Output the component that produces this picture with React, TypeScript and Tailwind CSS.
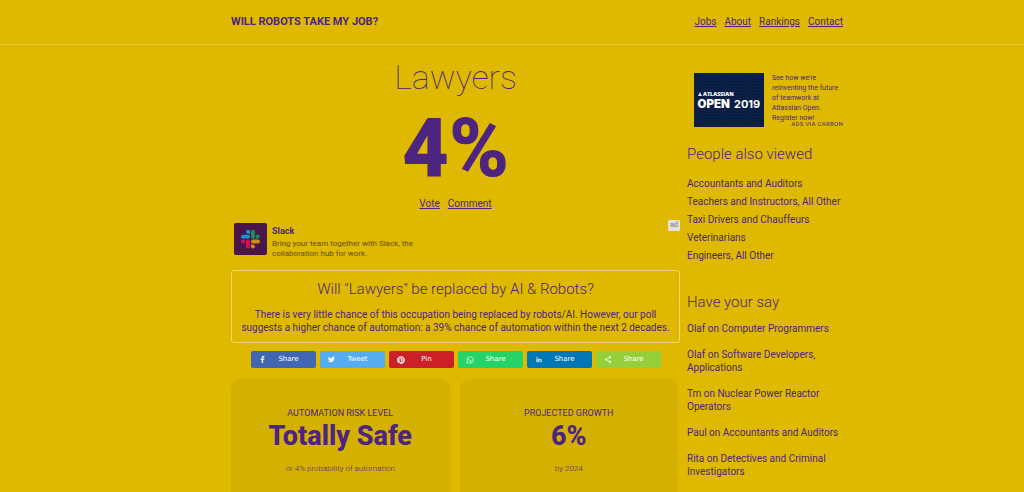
import type { ReactNode } from 'react';
import { FaFacebookF, FaTwitter, FaPinterest, FaWhatsapp, FaLinkedinIn } from 'react-icons/fa';
import { MdShare } from 'react-icons/md';

const navLinks = ['Jobs', 'About', 'Rankings', 'Contact'];

const alsoViewed = [
    'Accountants and Auditors',
    'Teachers and Instructors, All Other',
    'Taxi Drivers and Chauffeurs',
    'Veterinarians',
    'Engineers, All Other',
];

const comments = [
    'Olaf on Computer Programmers',
    'Olaf on Software Developers, Applications',
    'Tm on Nuclear Power Reactor Operators',
    'Paul on Accountants and Auditors',
    'Rita on Detectives and Criminal Investigators',
];

const shares = [
    { label: 'Share', color: 'bg-[#4267b2]', icon: <FaFacebookF size={7} /> },
    { label: 'Tweet', color: 'bg-[#55acee]', icon: <FaTwitter size={7} /> },
    { label: 'Pin', color: 'bg-[#cb2027]', icon: <FaPinterest size={8} /> },
    { label: 'Share', color: 'bg-[#25d366]', icon: <FaWhatsapp size={8} /> },
    { label: 'Share', color: 'bg-[#0077b5]', icon: <FaLinkedinIn size={6} /> },
    { label: 'Share', color: 'bg-[#95d03a]', icon: <MdShare size={9} /> },
];

const stats = [
    { title: 'AUTOMATION RISK LEVEL', value: 'Totally Safe', note: 'or 4% probability of automation' },
    { title: 'PROJECTED GROWTH', value: '6%', note: 'by 2024' },
];

function Container({ children, className }: { children: ReactNode; className: string }) {
    return <div className={`mx-auto w-full max-w-[662px] pl-[50px] ${className}`}>{children}</div>;
}

function SlackLogo() {
    return (
        <svg viewBox="0 0 33 32" className="h-8 w-[33px] shrink-0" aria-hidden="true">
            <rect width="33" height="32" rx="2" fill="#4a154b" />
            <g fill="#1597d4">
                <rect x="7" y="11.700" width="9" height="3.900" rx="1.900" />
                <path d="M14 6.700a2 2 0 0 1 2 2v2h-2a2 2 0 0 1 0-4z" />
            </g>
            <g fill="#16915c">
                <rect x="17" y="6.700" width="3.900" height="9" rx="1.900" />
                <path d="M25.700 13.500a2 2 0 0 1-2 2h-2v-2a2 2 0 0 1 4 0z" />
            </g>
            <g fill="#cf8a12">
                <rect x="17" y="16.500" width="9" height="3.900" rx="1.900" />
                <path d="M19 25.500a2 2 0 0 1-2-2v-2h2a2 2 0 0 1 0 4z" />
            </g>
            <g fill="#d90f56">
                <rect x="12" y="16.500" width="3.900" height="9" rx="1.900" />
                <path d="M7 18.500a2 2 0 0 1 2-2h2v2a2 2 0 0 1-4 0z" />
            </g>
        </svg>
    );
}

function AtlassianBanner() {
    return (
        <svg viewBox="0 0 70 54" className="h-[54px] w-[70px] shrink-0" role="img" aria-label="Atlassian Open 2019">
            <defs>
                <pattern id="dots" width="3" height="3" patternUnits="userSpaceOnUse">
                    <rect x="1" y="1" width="1" height="1" fill="#14274f" />
                </pattern>
            </defs>
            <rect width="70" height="54" fill="#091e42" />
            <rect width="70" height="54" fill="url(#dots)" />
            <path d="M4 23l1.400-2.200 1.200 2.200zM5.300 20.300l.6-1.300 2 4h-1.200z" fill="#fff" />
            <text x="9" y="23" fontSize="5.400" fontWeight="800" fill="#fff" fontFamily="Open Sans, sans-serif">ATLASSIAN</text>
            <text x="3.500" y="35" fontSize="11.500" fontWeight="900" fill="#fff" fontFamily="Inter, sans-serif">OPEN</text>
            <text x="40" y="35" fontSize="11" fontWeight="700" fill="#fff" fontFamily="Inter, sans-serif">2019</text>
        </svg>
    );
}

export default function App() {
    return (
        <div className="min-h-screen bg-[#dfb900] font-[Roboto,sans-serif] text-[10px] leading-[13px] text-[#4d2480]">
            <header className="border-b border-[#e7cb45]">
                <Container className="flex h-11 items-center justify-between pb-[2px]">
                    <a href="#" className="text-[11px] font-bold">WILL ROBOTS TAKE MY JOB?</a>
                    <nav className="flex gap-2">
                        {navLinks.map((link) => (
                            <a key={link} href="#" className="underline">{link}</a>
                        ))}
                    </nav>
                </Container>
            </header>
            <Container className="flex gap-[7px]">
                <main className="min-w-0 flex-1">
                    <div className="pt-3 text-center">
                        <h1 className="text-[34px] leading-10 font-thin">Lawyers</h1>
                        <p className="pt-2 text-[81px] leading-[88px] font-black">4%</p>
                        <div className="flex justify-center gap-2 pt-1">
                            <a href="#" className="underline">Vote</a>
                            <a href="#" className="underline">Comment</a>
                        </div>
                    </div>

                    <div className="flex items-start pt-[10px] pl-[3px]">
                        <div className="pt-[3px]"><SlackLogo /></div>
                        <a href="#" className="ml-[5px] w-[150px] pt-[6px] text-[8px] leading-[10px] text-[#5f4d1c]">
                            <strong className="mb-[3px] block text-[9px] text-[#4d2480]">Slack</strong>
                            Bring your team together with Slack, the collaboration hub for work.
                        </a>
                        <span className="ml-auto h-[11px] rounded-[1px] bg-[#e4e1d6] px-[2px] text-[7px] leading-[11px] font-medium text-[#888]">ad</span>
                    </div>

                    <section className="mt-[11px] rounded-[3px] border border-[#ebd67a] p-2 text-center">
                        <h2 className="text-[15px] leading-5 font-light">Will "Lawyers" be replaced by AI &amp; Robots?</h2>
                        <p className="pt-[9px]">
                            There is very little chance of this occupation being replaced by robots/AI. However, our poll suggests a higher chance of automation: a 39% chance of automation within the next 2 decades.
                        </p>
                    </section>

                    <div className="flex justify-center gap-1 pt-2">
                        {shares.map((s, i) => (
                            <button key={i} className={`flex h-[17px] w-[65px] items-center rounded-[2px] pr-[5px] pl-2 font-['DejaVu_Sans',sans-serif] text-[7px] leading-none text-white ${s.color}`}>
                                <span className="flex w-2 justify-center">{s.icon}</span>
                                <span className="flex-1 text-center">{s.label}</span>
                            </button>
                        ))}
                    </div>

                    <div className="grid grid-cols-2 gap-[10px] pt-[11px] pr-[2px]">
                        {stats.map((s) => (
                            <section key={s.title} className="rounded-[10px] bg-[#d4b000] pt-7 pb-8 text-center">
                                <h3 className="text-[9px]">{s.title}</h3>
                                <p className="text-[27px] leading-8 font-extrabold">{s.value}</p>
                                <p className="pt-[10px] text-[8px] font-light">{s.note}</p>
                            </section>
                        ))}
                    </div>
                </main>

                <aside className="w-[156px] shrink-0">
                    <div className="relative flex gap-2 pt-7 pl-[7px]">
                        <AtlassianBanner />
                        <a href="#" className="text-[7px] leading-[10px]">
                            See how we're reinventing the future of teamwork at Atlassian Open. Register now!
                        </a>
                        <a href="#" className="absolute right-0 -bottom-[2px] text-[6px] leading-[10px] tracking-wider">ADS VIA CARBON</a>
                    </div>

                    <h2 className="pt-[17px] text-[15px] leading-5 font-light">People also viewed</h2>
                    <ul className="pt-[11px] leading-[18px]">
                        {alsoViewed.map((job) => (
                            <li key={job}><a href="#">{job}</a></li>
                        ))}
                    </ul>

                    <h2 className="pt-[27px] text-[15px] leading-5 font-light">Have your say</h2>
                    <ul className="space-y-[13px] pt-[10px]">
                        {comments.map((comment) => (
                            <li key={comment}><a href="#">{comment}</a></li>
                        ))}
                    </ul>
                </aside>
            </Container>
        </div>
    );
}
